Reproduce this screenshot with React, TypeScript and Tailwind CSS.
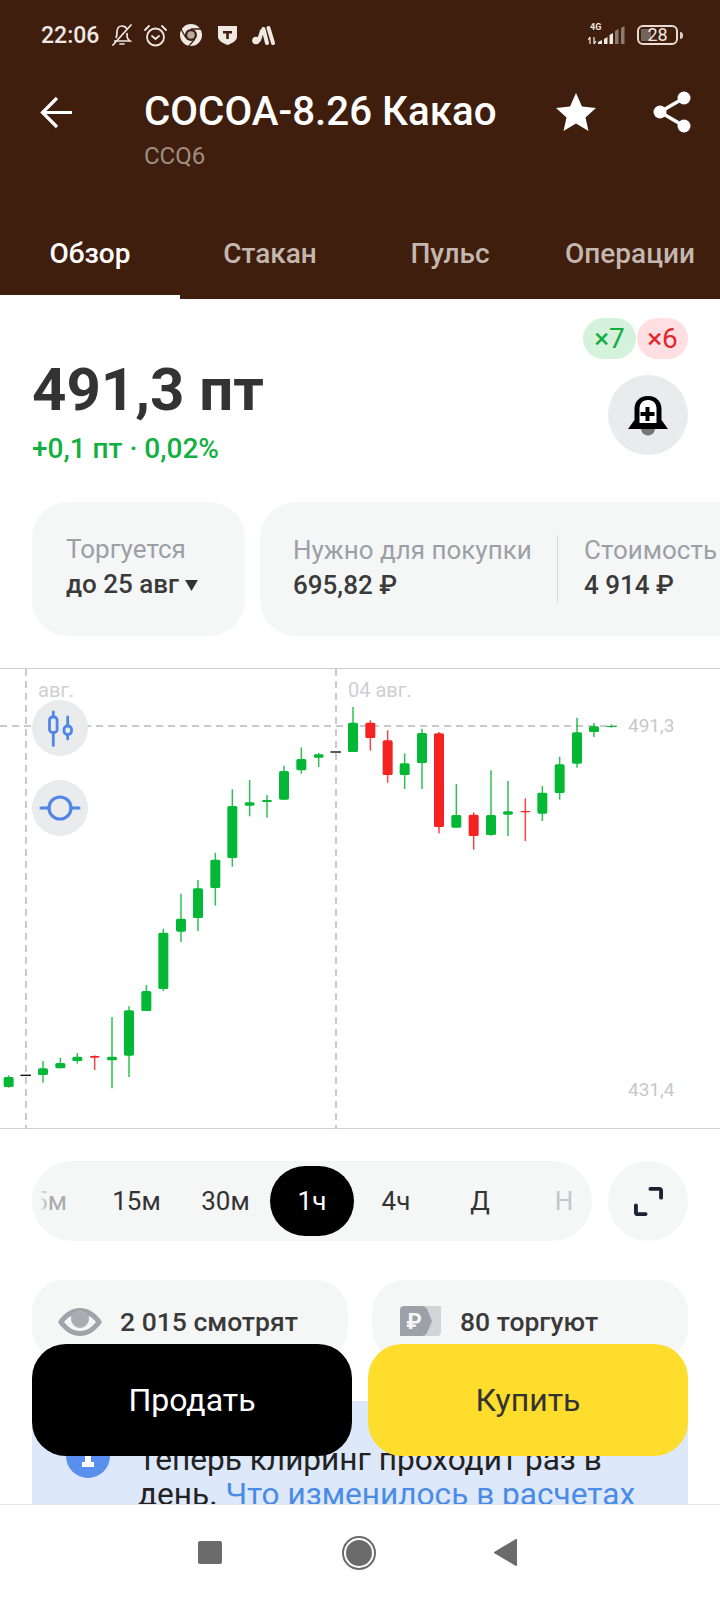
import React from 'react';

type Candle = [number, number, number, number, number, 'g' | 'r'];

// x, wick top, wick bottom, body top, body bottom (3x of the chart pixels, y offset 660)
const candles: Candle[] = [
  [26, 1243, 1280, 1248, 1278, 'g'],
  [129, 1200, 1265, 1222, 1242, 'g'],
  [181, 1190, 1222, 1206, 1222, 'g'],
  [232, 1176, 1208, 1187, 1200, 'g'],
  [284, 1183, 1227, 1185, 1190, 'r'],
  [336, 1068, 1282, 1187, 1198, 'g'],
  [387, 1036, 1248, 1048, 1184, 'g'],
  [439, 972, 1050, 990, 1050, 'g'],
  [490, 803, 990, 815, 984, 'g'],
  [543, 698, 843, 773, 812, 'g'],
  [594, 657, 810, 682, 771, 'g'],
  [646, 575, 734, 596, 681, 'g'],
  [697, 385, 617, 435, 591, 'g'],
  [749, 357, 466, 424, 434, 'g'],
  [801, 402, 470, 417, 423, 'g'],
  [852, 314, 416, 330, 416, 'g'],
  [904, 259, 338, 294, 328, 'g'],
  [956, 276, 318, 280, 290, 'g'],
  [1059, 138, 273, 185, 273, 'g'],
  [1111, 178, 269, 185, 231, 'r'],
  [1163, 208, 365, 238, 342, 'r'],
  [1214, 277, 384, 307, 342, 'g'],
  [1266, 203, 384, 216, 306, 'g'],
  [1317, 213, 517, 217, 498, 'r'],
  [1369, 369, 500, 462, 500, 'g'],
  [1421, 454, 566, 461, 525, 'r'],
  [1473, 328, 524, 462, 522, 'g'],
  [1524, 360, 525, 451, 461, 'g'],
  [1576, 412, 540, 450, 454, 'r'],
  [1627, 375, 480, 395, 458, 'g'],
  [1679, 287, 416, 310, 396, 'g'],
  [1731, 170, 320, 214, 308, 'g'],
  [1782, 186, 228, 196, 213, 'g'],
  [1834, 190, 200, 195, 197, 'g'],
];

const colors = { g: '#04b836', r: '#f52222' };
const sy = (v: number) => v / 3 - 8;

const Chart = () => (
  <svg width="720" height="460" viewBox="0 0 720 460" className="block">
    <line x1="26" y1="0" x2="26" y2="460" stroke="#c9cacc" strokeWidth="2" strokeDasharray="7 5" />
    <line x1="336" y1="0" x2="336" y2="460" stroke="#c9cacc" strokeWidth="2" strokeDasharray="7 5" />
    <line x1="0" y1="57" x2="617" y2="57" stroke="#c9cacc" strokeWidth="2" strokeDasharray="7 5" />
    <line x1="20.500" y1={sy(1243)} x2="31" y2={sy(1243)} stroke="#111" strokeWidth="1.400" />
    <line x1="330.500" y1={sy(273)} x2="341" y2={sy(273)} stroke="#111" strokeWidth="1.400" />
    {candles.map(([x, wt, wb, bt, bb, c]) => (
      <g key={x}>
        <line x1={x / 3} y1={sy(wt)} x2={x / 3} y2={sy(wb)} stroke={colors[c]} strokeWidth="1.500" strokeOpacity="0.85" />
        <rect
          x={x / 3 - (x === 1834 ? 5.5 : 5)}
          y={sy(bt)}
          width={x === 1834 ? 11 : 10}
          height={Math.max((bb - bt) / 3, 1)}
          rx="1.600"
          fill={colors[c]}
        />
      </g>
    ))}
  </svg>
);

const StatusBar = () => (
  <div className="flex h-[70px] items-center pl-[41px] pr-[37px] text-[#f0e8e2]">
    <span className="w-[57px] text-[23px] font-medium leading-none">22:06</span>
    <svg width="20" height="22" viewBox="0 0 20 22" fill="none" stroke="currentColor" strokeWidth="1.700" className="ml-[14px]">
      <path d="M4 14c1-2 1-3 1-6 0-4 2-6 5-6 2 0 4 1 5 3M15 9c0 4 0 6 3 8H2" />
      <path d="M8 20h4M19 1 1 21" strokeLinecap="round" />
    </svg>
    <svg width="23" height="23" viewBox="0 0 23 23" fill="none" stroke="currentColor" strokeWidth="1.800" className="ml-[12px]">
      <circle cx="11.500" cy="13" r="8.500" />
      <path d="m8 12 3.500 3 3.500-3M1 6l4-4M22 6l-4-4" strokeLinecap="round" />
    </svg>
    <svg width="22" height="22" viewBox="0 0 22 22" className="ml-[13px]">
      <circle cx="11" cy="11" r="11" fill="currentColor" />
      <circle cx="11" cy="11" r="6" fill="#3f1e0e" />
      <circle cx="11" cy="11" r="3.800" fill="#b7aaa2" />
      <path d="M11 5h11M6 14 1 5M14.500 15.500 9 22" stroke="#3f1e0e" strokeWidth="1.300" fill="none" />
    </svg>
    <svg width="19" height="19" viewBox="0 0 19 19" className="ml-[16px]">
      <path d="M0 0h19v11c0 3-4 6-9.500 8C4 17 0 14 0 11z" fill="currentColor" />
      <path d="M5 5h9v2.500h-3.200V13H8.200V7.500H5z" fill="#3f1e0e" />
    </svg>
    <svg width="23" height="19" viewBox="0 0 23 19" fill="none" className="ml-[15px]">
      <circle cx="4" cy="14.500" r="3.800" fill="currentColor" />
      <path d="M7 14 10 5M11.500 3 15 17M16.500 2 21 17" stroke="currentColor" strokeWidth="4" strokeLinecap="round" />
    </svg>
    <svg width="38" height="24" viewBox="0 0 38 24" className="ml-auto">
      <path d="M2 14v7M0 17l2-3M6 21v-7M8 18l-2 3" stroke="currentColor" strokeWidth="1.200" fill="none" />
      <path d="M10 21v-2l4-2v4zM16 21v-5l3.500-2v7zM21.500 21v-9l3.500-2v11z" fill="currentColor" />
      <path d="M27 21V8l3.500-2v15zM33 21V5l3.500-2v18z" fill="#8f7a6e" />
      <text x="2" y="7" fontSize="9" fontWeight="700" fill="currentColor" fontFamily="Roboto, sans-serif">4G</text>
    </svg>
    <div className="ml-[11px] flex items-center">
      <div className="relative flex h-[20px] w-[41px] items-center justify-center rounded-[6px] border-2 border-[#e8dcd4] text-[18px] leading-none">
        <div className="absolute bottom-[2px] left-[2px] top-[2px] w-[10px] bg-[#75645a]" />
        <span className="relative">28</span>
      </div>
      <div className="ml-[2px] h-[7px] w-[3px] rounded-r-sm bg-[#d9cdc5]" />
    </div>
  </div>
);

const Header = () => (
  <div className="flex h-[299px] flex-col bg-[#3f1e0e]">
    <StatusBar />
    <div className="flex pl-[40px] pr-[29px] pt-[20px]">
      <svg width="33" height="33" viewBox="0 0 33 33" fill="none" stroke="white" strokeWidth="3.200" className="mt-[6px]">
        <path d="M32 16.500H3M17 2 2.500 16.500 17 31" />
      </svg>
      <div className="ml-[71px]">
        <div className="whitespace-nowrap text-[40.300px] font-medium leading-[44px] text-white">COCOA-8.26 Какао</div>
        <div className="mt-[8px] text-[24px] leading-[28px] text-[#a08d82]">CCQ6</div>
      </div>
      <svg width="40" height="38" viewBox="0 0 40 38" fill="white" className="ml-auto mt-[3px]">
        <path d="m20 0 6 13.500 14 1.500-10.500 9.500L32.500 38 20 30.500 7.500 38l3-13.500L0 15l14-1.500z" />
      </svg>
      <svg width="38" height="42" viewBox="0 0 38 42" fill="white" className="ml-[57px] mt-[1px]">
        <circle cx="31" cy="7" r="6.500" />
        <circle cx="7" cy="21" r="6.500" />
        <circle cx="31" cy="35" r="6.500" />
        <path d="M31 7 7 21l24 14" fill="none" stroke="white" strokeWidth="3.500" />
      </svg>
    </div>
    <div className="mt-auto flex h-[90px] items-center text-[28px] font-medium text-[#c4b7af]">
      <div className="relative flex h-full w-[180px] items-center justify-center text-white">
        Обзор
        <div className="absolute bottom-0 left-0 h-[4px] w-full bg-white" />
      </div>
      <div className="w-[180px] text-center">Стакан</div>
      <div className="w-[180px] text-center">Пульс</div>
      <div className="w-[180px] text-center">Операции</div>
    </div>
  </div>
);

const frames = [
  { label: '5м', w: 'w-[84px] text-[#a9acaf]' },
  { label: '15м', w: 'w-[89px]' },
  { label: '30м', w: 'w-[89px]' },
  { label: '1ч', w: 'w-[84px] rounded-full bg-black text-white' },
  { label: '4ч', w: 'w-[84px]' },
  { label: 'Д', w: 'w-[84px]' },
  { label: 'Н', w: 'w-[84px] text-[#c3c6c9]' },
];

export default function App() {
  return (
    <div
      className="relative flex h-[1600px] w-[720px] flex-col overflow-hidden bg-white text-[#333]"
      style={{ fontFamily: 'Roboto, "Noto Sans", sans-serif' }}
    >
      <Header />

      <div className="min-h-0 flex-1 overflow-hidden">
        <div className="flex h-[203px] justify-between px-[32px]">
          <div className="pt-[56px]">
            <div className="text-[60px] font-bold leading-[70px] text-[#333]">491,3 пт</div>
            <div className="mt-[6px] text-[28px] font-medium leading-[36px] text-[#12b040]">+0,1 пт · 0,02%</div>
          </div>
          <div className="flex flex-col items-end pt-[19px]">
            <div className="flex gap-[1px] text-[28px] leading-[41px]">
              <div className="h-[41px] w-[53px] rounded-full bg-[#d5f2dd] text-center text-[#12ad3d]">×7</div>
              <div className="h-[41px] w-[51px] rounded-full bg-[#ffdfe1] text-center text-[#e3262c]">×6</div>
            </div>
            <div className="mt-[16px] flex h-[80px] w-[80px] items-center justify-center rounded-full bg-[#e9ebec]">
              <svg width="40" height="40" viewBox="0 0 40 40" className="mt-[1px]">
                <path d="M20 0C11 0 6.500 6 6.500 13v11L0 33h40l-6.500-9V13C33.500 6 29 0 20 0z" fill="#000" />
                <path d="M20 4c-6 0-8.500 4-8.500 9v14h17V13c0-5-2.500-9-8.500-9z" fill="#fff" />
                <path d="M17.500 11h4v5h5v4h-5v5h-4v-5h-5v-4h5z" fill="#000" />
                <path d="M13 33a7 6.500 0 0 0 14 0z" fill="#777" />
              </svg>
            </div>
          </div>
        </div>

        <div className="flex gap-[15px] pl-[32px]">
          <div className="h-[134px] w-[213px] shrink-0 rounded-[36px] bg-[#f5f7f7] pl-[34px] pt-[31px]">
            <div className="text-[26px] leading-[33px] text-[#9ca0a6]">Торгуется</div>
            <div className="flex items-center text-[26px] font-medium leading-[37px] text-[#3a3a3a]">
              до 25 авг
              <svg width="13" height="11" viewBox="0 0 14 12" className="ml-[6px] mt-[2px]">
                <path d="M0 0h14L7 12z" fill="#333" />
              </svg>
            </div>
          </div>
          <div className="flex h-[134px] w-[520px] shrink-0 items-start rounded-[36px] bg-[#f5f7f7] pl-[33px] pt-[32px]">
            <div className="w-[264px]">
              <div className="whitespace-nowrap text-[26px] leading-[33px] text-[#9ca0a6]">Нужно для покупки</div>
              <div className="text-[26px] font-medium leading-[37px] text-[#3a3a3a]">695,82 ₽</div>
            </div>
            <div className="mt-[1px] h-[68px] w-px bg-[#d5d8da]" />
            <div className="ml-[26px]">
              <div className="whitespace-nowrap text-[26px] leading-[33px] text-[#9ca0a6]">Стоимость</div>
              <div className="text-[26px] font-medium leading-[37px] text-[#3a3a3a]">4 914 ₽</div>
            </div>
          </div>
        </div>

        <div className="relative mt-[32px] h-[461px] border-y border-[#cfd0d2]">
          <Chart />
          <span className="absolute left-[38px] top-[9px] text-[20px] leading-[24px] text-[#cdcfd2]">авг.</span>
          <span className="absolute left-[348px] top-[9px] text-[20px] leading-[24px] text-[#cdcfd2]">04 авг.</span>
          <span className="absolute left-[628px] top-[45px] text-[19px] leading-[24px] text-[#c6c8cb]">491,3</span>
          <span className="absolute left-[628px] top-[409px] text-[19px] leading-[24px] text-[#c6c8cb]">431,4</span>
          <div className="absolute left-[32px] top-[31px] h-[56px] w-[56px] rounded-full bg-[#e9ebec]">
            <svg width="56" height="56" viewBox="0 0 56 56" fill="none" stroke="#4f86e8" strokeWidth="2.800" strokeLinecap="round">
              <path d="M21.300 12v4.500M21.300 33v12.500M35.700 17v8.500M35.700 35v4" />
              <rect x="17.500" y="17" width="7.600" height="15.500" rx="3" />
              <rect x="32" y="26" width="7.500" height="8.500" rx="3.500" />
            </svg>
          </div>
          <div className="absolute left-[32px] top-[111px] h-[56px] w-[56px] rounded-full bg-[#e9ebec]">
            <svg width="56" height="56" viewBox="0 0 56 56" fill="none" stroke="#4f86e8" strokeWidth="3.200" strokeLinecap="round">
              <circle cx="28" cy="28" r="11" />
              <path d="M9 28h8M39 28h8" />
            </svg>
          </div>
        </div>

        <div className="mt-[32px] flex justify-between px-[32px]">
          <div className="relative h-[80px] w-[560px] overflow-hidden rounded-full bg-[#f5f7f7]">
            <div className="ml-[-24px] flex h-full items-center text-[26px]">
              {frames.map((f) => (
                <div key={f.label} className={`flex h-[70px] shrink-0 items-center justify-center ${f.w}`}>
                  {f.label}
                </div>
              ))}
            </div>
            <div className="absolute bottom-0 left-0 top-0 w-[16px] bg-gradient-to-r from-[#f5f7f7] via-[#f5f7f7] to-transparent" />
          </div>
          <div className="flex h-[80px] w-[80px] items-center justify-center rounded-full bg-[#f5f7f7]">
            <svg width="29" height="29" viewBox="0 0 30 30" fill="none" stroke="#1a2233" strokeWidth="4" strokeLinecap="round" strokeLinejoin="round">
              <path d="M17 2h9a2 2 0 0 1 2 2v7M2 19v7a2 2 0 0 0 2 2h8" />
            </svg>
          </div>
        </div>

        <div className="mt-[39px] flex justify-between px-[32px] text-[26.500px] font-medium text-[#3a3a3a]">
          <div className="flex h-[80px] w-[316px] items-start rounded-[32px] bg-[#f5f7f7] pl-[26px] pt-[28px]">
            <svg width="44" height="28" viewBox="0 0 44 28" className="shrink-0">
              <path d="M22 0C13 0 5 6 0 14c5 8 13 14 22 14s17-6 22-14C39 6 31 0 22 0z" fill="#a0a4aa" />
              <path d="M22 6C15 6 10 9 6 14c4 5 9 9 16 9s12-4 16-9c-4-5-9-8-16-8z" fill="#f5f7f7" />
              <circle cx="22" cy="11" r="9" fill="#a9adb3" />
            </svg>
            <span className="ml-[18px] leading-[28px]">2 015 смотрят</span>
          </div>
          <div className="flex h-[80px] w-[316px] items-start rounded-[32px] bg-[#f5f7f7] pl-[28px] pt-[26px]">
            <svg width="41" height="30" viewBox="0 0 41 30" className="shrink-0">
              <path d="M14 0h27v26a4 4 0 0 1-4 4H14z" fill="#d2d5d8" />
              <path d="M4 0h17c3 0 5 1 6 3l5 12-5 12c-1 2-3 3-6 3H0V4a4 4 0 0 1 4-4z" fill="#9ca0a7" />
              <text x="14" y="23" textAnchor="middle" fontSize="22" fontWeight="700" fill="#f5f7f7">₽</text>
            </svg>
            <span className="ml-[19px] mt-[2px] leading-[28px]">80 торгуют</span>
          </div>
        </div>

        <div className="mx-[32px] mt-[41px] flex h-[140px] rounded-t-[28px] bg-[#dde8fb] pl-[34px] pt-[33px]">
          <svg width="44" height="44" viewBox="0 0 44 44" className="shrink-0">
            <circle cx="22" cy="22" r="22" fill="#5b8fee" />
            <path d="M19 14h6v17h-6zM16 28h12v5H16z" fill="#fff" />
          </svg>
          <div className="ml-[28px] pr-[34px] pt-[8px] text-[31.600px] leading-[35px] text-[#222]">
            Теперь клиринг проходит раз в день. <span className="text-[#4a8be6]">Что изменилось в расчетах</span>
          </div>
        </div>
      </div>

      <div className="flex h-[96px] items-center justify-center border-t border-[#e6e6e6] bg-white pr-[6px]">
        <div className="h-[23px] w-[24px] rounded-[2px] bg-[#6b6b6b]" />
        <div className="ml-[120px] flex h-[34px] w-[34px] items-center justify-center rounded-full border-2 border-[#6b6b6b]">
          <div className="h-[26px] w-[26px] rounded-full bg-[#6b6b6b]" />
        </div>
        <svg width="23" height="27" viewBox="0 0 23 27" className="ml-[118px]">
          <path d="M23 1v25a1 1 0 0 1-1.500.8L0.500 14.300a1 1 0 0 1 0-1.600L21.500.200A1 1 0 0 1 23 1z" fill="#6b6b6b" />
        </svg>
      </div>

      <div className="absolute bottom-[144px] left-[32px] right-[32px] flex gap-[16px] text-[32px]">
        <div className="flex h-[112px] flex-1 items-center justify-center rounded-[34px] bg-black text-white">Продать</div>
        <div className="flex h-[112px] flex-1 items-center justify-center rounded-[34px] bg-[#ffdd2d] text-[#333]">Купить</div>
      </div>
    </div>
  );
}
